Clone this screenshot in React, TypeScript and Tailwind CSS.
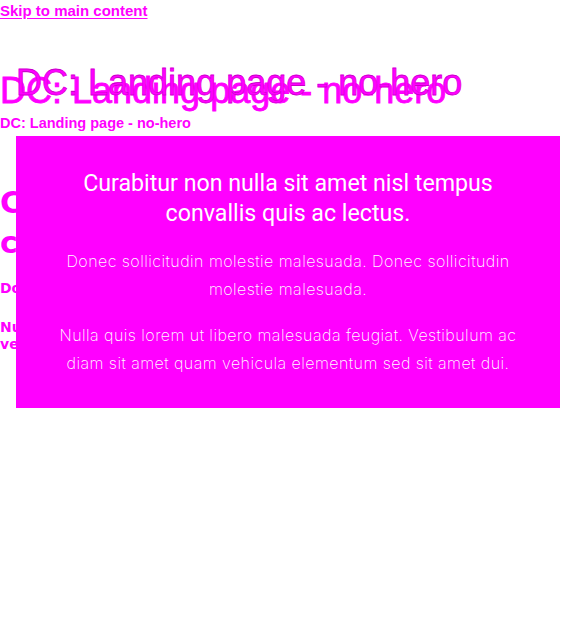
import React from "react";

export default function App() {
  return (
    <div className="relative w-[576px] h-[630px] overflow-hidden bg-white text-[#ff00ff]">
      <a
        href="#main"
        className="block w-max font-['Liberation_Sans',Arial,sans-serif] font-bold text-[15px] leading-[22px] underline underline-offset-2 text-[#ff00ff]"
      >
        Skip to main content
      </a>

      <h1 className="relative mt-[51px] font-['Liberation_Sans',Arial,sans-serif] font-normal text-[36px] leading-[36px] whitespace-nowrap">
        <span className="block [-webkit-text-stroke:0.8px_#ff00ff]">DC: Landing page - no-hero</span>
        <span className="absolute left-4 -top-2 block [-webkit-text-stroke:0.8px_#ff00ff]">
          DC: Landing page - no-hero
        </span>
        <span className="absolute left-4 -top-2 block text-transparent [-webkit-text-stroke:0.3px_#000] opacity-40">
          DC: Landing page - no-hero
        </span>
      </h1>

      <p className="mt-1 font-['Liberation_Sans',Arial,sans-serif] font-bold text-[14.5px] leading-[20px]">
        DC: Landing page - no-hero
      </p>

      <div
        id="main"
        className="mt-[50px] w-[550px] overflow-hidden whitespace-nowrap font-['DejaVu_Sans',sans-serif] font-bold"
      >
        <h2 className="text-[30px] leading-[40px]">
          Curabitur non nulla sit amet nisl tempus
          <br />
          convallis quis ac lectus.
        </h2>
        <p className="mt-[17px] text-[14px] leading-[17px]">
          Donec sollicitudin molestie malesuada. Donec sollicitudin molestie malesuada.
        </p>
        <p className="mt-[22px] text-[14px] leading-[17px]">
          Nulla quis lorem ut libero malesuada feugiat. Vestibulum ac diam sit amet quam
          <br />
          vehicula elementum sed sit amet dui.
        </p>
      </div>

      <section className="absolute left-4 top-[136px] w-[544px] h-[272px] bg-[#ff00ff] px-8 pt-8 text-center text-white">
        <h3 className="font-['Roboto',sans-serif] font-normal text-[23.2px] leading-[30px]">
          Curabitur non nulla sit amet nisl tempus convallis quis ac lectus.
        </h3>
        <p className="mt-[19px] font-['Inter',sans-serif] font-extralight text-[16px] leading-[28px] tracking-[0.45px]">
          Donec sollicitudin molestie malesuada. Donec sollicitudin molestie malesuada.
        </p>
        <p className="mt-[18px] font-['Inter',sans-serif] font-extralight text-[16px] leading-[28px] tracking-[0.45px]">
          Nulla quis lorem ut libero malesuada feugiat. Vestibulum ac diam sit amet quam vehicula elementum sed sit amet dui.
        </p>
      </section>
    </div>
  );
}
